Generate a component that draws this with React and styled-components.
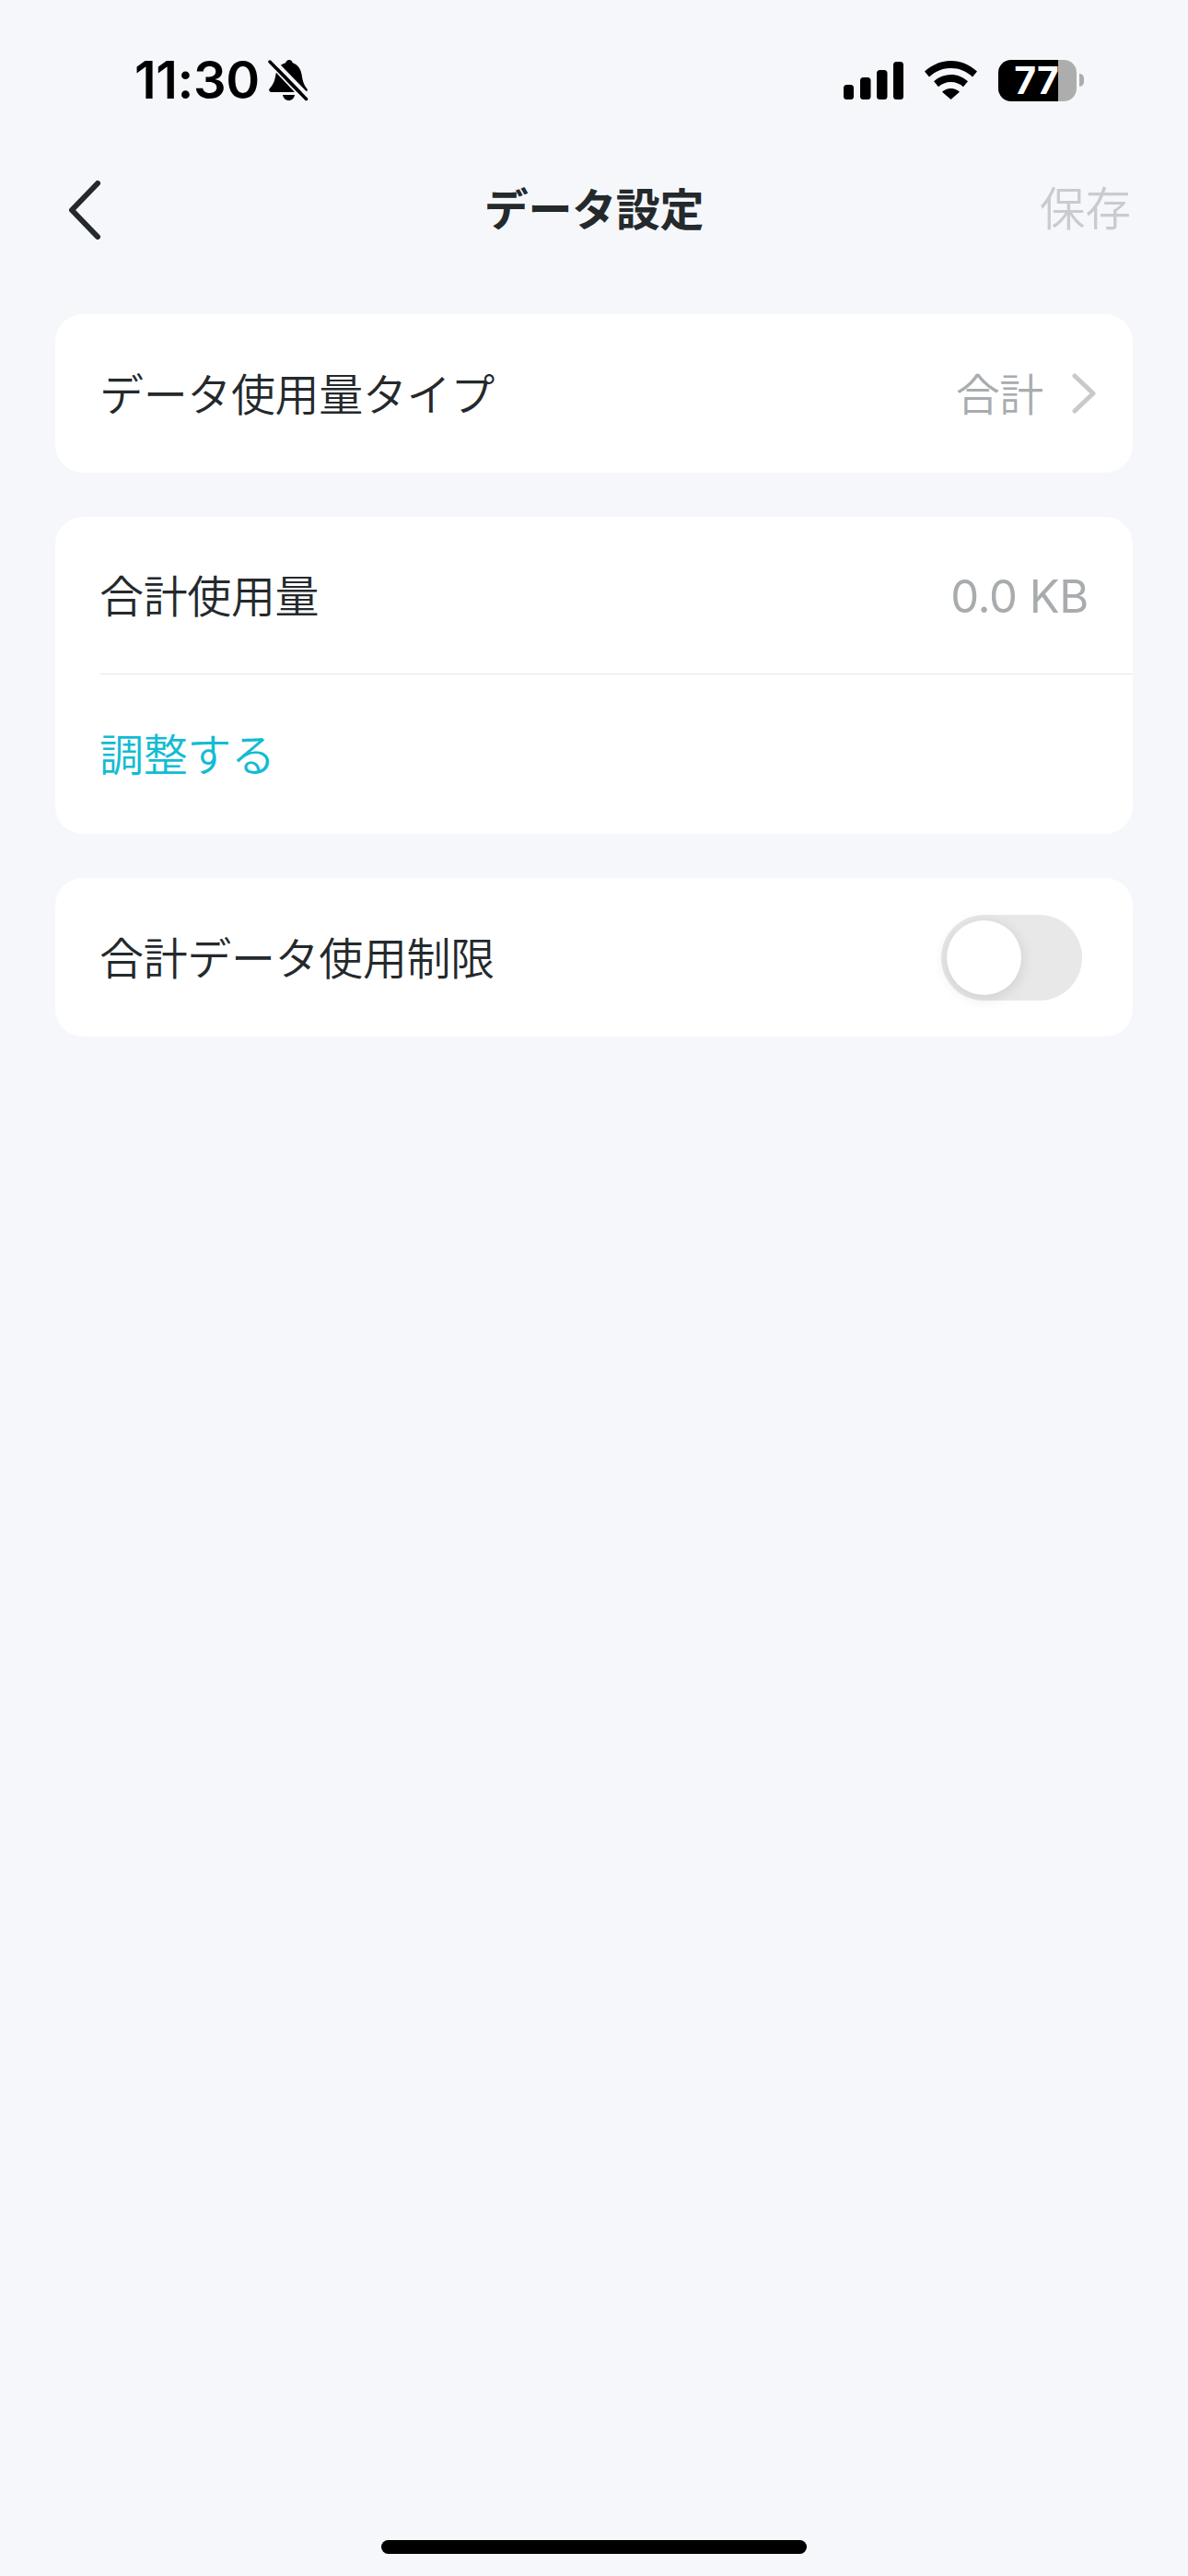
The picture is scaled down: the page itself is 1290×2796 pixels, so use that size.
import React from 'react';
import styled, { createGlobalStyle } from 'styled-components';

const GlobalStyle = createGlobalStyle`
  html, body {
    margin: 0;
    padding: 0;
    background: #f5f7fb;
  }

  * {
    box-sizing: border-box;
  }
`;

const FONT_STACK = `"Noto Sans CJK JP", "Liberation Sans", sans-serif`;

const Screen = styled.div`
  display: flex;
  flex-direction: column;
  width: 1290px;
  height: 2796px;
  background: #f5f7fb;
  color: #24292c;
  font-family: ${FONT_STACK};
  font-size: 48px;
  font-weight: 350;
  letter-spacing: -0.35px;
`;

const StatusBar = styled.div`
  display: flex;
  justify-content: space-between;
  align-items: center;
  height: 174px;
  padding: 0 113px 0 146px;
`;

const StatusGroup = styled.div`
  display: flex;
  align-items: center;
  gap: ${({ $gap }) => $gap}px;
`;

const Clock = styled.span`
  font-family: Inter, sans-serif;
  font-size: 56px;
  font-weight: 600;
  line-height: 1;
  letter-spacing: -0.4px;
  color: #000;
`;

const Battery = styled.div`
  display: flex;
  align-items: center;
  gap: 3px;
`;

const BatteryBody = styled.div`
  display: flex;
  justify-content: center;
  align-items: center;
  width: 85px;
  height: 45px;
  padding-right: 2px;
  border-radius: 14px;
  background: linear-gradient(to right, #000 ${({ $level }) => $level}%, #adadad ${({ $level }) => $level}%);
  color: #fff;
  font-family: Inter, sans-serif;
  font-size: 41px;
  font-weight: 700;
  line-height: 1;
  letter-spacing: 0;
`;

const BatteryCap = styled.div`
  width: 5px;
  height: 14px;
  border-radius: 0 7px 7px 0;
  background: #adadad;
`;

const NavBar = styled.header`
  display: grid;
  grid-template-columns: 1fr auto 1fr;
  align-items: center;
  height: 108px;
  padding: 0 62px 8px 74px;
`;

const BackButton = styled.button`
  display: flex;
  justify-self: start;
  margin-top: 8px;
  padding: 0;
  border: 0;
  background: none;
`;

const Title = styled.h1`
  margin: 0 12px 0 0;
  font-size: 48px;
  font-weight: 700;
  line-height: 1;
`;

const SaveButton = styled.button`
  justify-self: end;
  padding: 0;
  border: 0;
  background: none;
  color: #c9ccce;
  font-family: ${FONT_STACK};
  font-size: 49.5px;
  font-weight: 350;
  line-height: 1;
`;

const Content = styled.main`
  display: flex;
  flex-direction: column;
  flex: 1;
  gap: 48px;
  padding: 59px 60px 0;
`;

const Card = styled.section`
  border-radius: 30px;
  background: #fff;
  overflow: hidden;
`;

const Row = styled.div`
  display: flex;
  justify-content: space-between;
  align-items: center;
  height: ${({ $height }) => $height || 172}px;
  padding: 0 ${({ $right }) => $right || 48}px 0 48px;
  line-height: 1;
`;

// CJK glyphs sit low in their line box, so labels get lifted a little
const Label = styled.span`
  margin-bottom: 5px;
  color: ${({ $accent }) => ($accent ? '#12bcd2' : 'inherit')};
`;

const Divider = styled.div`
  height: 1px;
  margin-left: 48px;
  background: #e8e9ea;
`;

const RowValue = styled.div`
  display: flex;
  align-items: center;
  gap: 31px;
  color: #a9acae;
`;

const Amount = styled.span`
  margin-top: 2px;
  color: #a9acae;
  font-family: Inter, sans-serif;
  font-size: 49px;
  font-weight: 400;
  letter-spacing: -0.4px;
`;

const Toggle = styled.div`
  display: flex;
  align-items: center;
  width: 153px;
  height: 93px;
  padding-left: 6px;
  border-radius: 47px;
  background: #e8e8e8;
`;

const ToggleKnob = styled.div`
  width: 81px;
  height: 81px;
  border-radius: 50%;
  background: #fff;
  box-shadow: 0 3px 16px rgba(0, 0, 0, 0.12);
`;

const HomeBar = styled.div`
  align-self: center;
  width: 462px;
  height: 15px;
  margin-bottom: 24px;
  border-radius: 8px;
  background: #000;
`;

const BellOffIcon = () => (
  <svg width="44" height="46" viewBox="0 0 44 46">
    <path
      fill="#000"
      d="M23 1c-2 0-3.400 1.400-3.800 3.200C13 5.800 9.500 10.500 8.500 16.500 7.500 23 6 27.500 2 31.800.4 33.700 1.400 36 3.800 36h36.400c2.400 0 3.400-2.300 1.800-4.200C38.500 27.500 37.500 23 36.500 16.500 35.500 10.500 32 5.800 26.800 4.200 26.400 2.400 25 1 23 1z"
    />
    <path fill="#000" d="M16 39h13c-.4 3.300-3 6-6.500 6s-6.100-2.700-6.500-6z" />
    <path stroke="#f5f7fb" strokeWidth="4" d="M4.500 0l40 41" />
    <path stroke="#f5f7fb" strokeWidth="2" d="M0 4l38 40" />
    <path stroke="#000" strokeWidth="3.500" strokeLinecap="round" d="M2 3l39.500 40.500" />
  </svg>
);

const SignalIcon = () => (
  <svg width="65" height="41" viewBox="0 0 65 41" fill="#000">
    <rect x="0" y="25" width="11" height="16" rx="3.500" />
    <rect x="18" y="17" width="11.500" height="24" rx="3.500" />
    <rect x="36" y="9" width="11.500" height="32" rx="3.500" />
    <rect x="54" y="0" width="11" height="41" rx="3.500" />
  </svg>
);

const WifiIcon = () => (
  <svg width="57" height="42" viewBox="0 0 57 42" fill="#000">
    <path d="M28.500 0C17.500 0 8 4.300 0 11.500l5 6C11.500 11.300 19.500 8 28.500 8s17 3.300 23.500 9.500l5-6C49 4.300 39.500 0 28.500 0z" />
    <path d="M28.500 15c-7 0-13.500 2.700-18.500 7.300l5 6c3.500-3.300 8.300-5.300 13.500-5.300s10 2 13.500 5.300l5-6C42 17.700 35.500 15 28.500 15z" />
    <path d="M28.500 30c-3.700 0-7 1.400-9.500 3.700L28.500 42 38 33.700C35.500 31.400 32.200 30 28.500 30z" />
  </svg>
);

const BackIcon = () => (
  <svg width="36" height="64" viewBox="0 0 36 64" fill="none">
    <path d="M32 3L4 32l28 29" stroke="#24292c" strokeWidth="6" strokeLinecap="round" strokeLinejoin="round" />
  </svg>
);

const ChevronIcon = () => (
  <svg width="26" height="44" viewBox="0 0 26 44" fill="none">
    <path d="M3 3l20 19L3 41" stroke="#c8c9ca" strokeWidth="5" strokeLinecap="round" strokeLinejoin="round" />
  </svg>
);

const App = () => (
  <>
    <GlobalStyle />
    <Screen>
      <StatusBar>
        <StatusGroup $gap={9}>
          <Clock>11:30</Clock>
          <BellOffIcon />
        </StatusGroup>
        <StatusGroup $gap={23}>
          <SignalIcon />
          <WifiIcon />
          <Battery>
            <BatteryBody $level={76}>77</BatteryBody>
            <BatteryCap />
          </Battery>
        </StatusGroup>
      </StatusBar>

      <NavBar>
        <BackButton>
          <BackIcon />
        </BackButton>
        <Title>データ設定</Title>
        <SaveButton>保存</SaveButton>
      </NavBar>

      <Content>
        <Card>
          <Row $right={40}>
            <Label>データ使用量タイプ</Label>
            <RowValue>
              <Label>合計</Label>
              <ChevronIcon />
            </RowValue>
          </Row>
        </Card>

        <Card>
          <Row $height={170}>
            <Label>合計使用量</Label>
            <Amount>0.0 KB</Amount>
          </Row>
          <Divider />
          <Row $height={173}>
            <Label $accent>調整する</Label>
          </Row>
        </Card>

        <Card>
          <Row $right={55}>
            <Label>合計データ使用制限</Label>
            <Toggle>
              <ToggleKnob />
            </Toggle>
          </Row>
        </Card>
      </Content>

      <HomeBar />
    </Screen>
  </>
);

export default App;
